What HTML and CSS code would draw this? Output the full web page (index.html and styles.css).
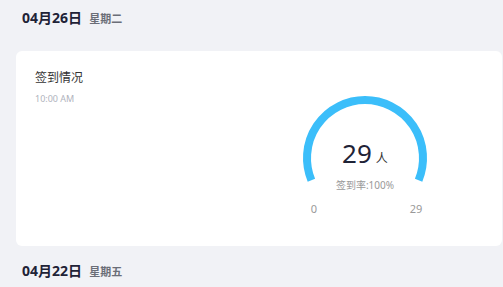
FILE: index.html
```html
<!DOCTYPE html>
<html lang="zh">
<head>
    <meta charset="UTF-8">
    <meta name="viewport" content="width=device-width, initial-scale=1.0">
    <title>签到情况</title>
    <link rel="stylesheet" href="styles.css">
</head>
<body>
    <div class="topbar"></div>

    <div class="day-head">
        <span class="day-date">04月26日</span>
        <span class="day-week">星期二</span>
    </div>

    <div class="card">
        <div class="card-info">
            <div class="card-title">签到情况</div>
            <div class="card-time">10:00 AM</div>
        </div>
        <svg class="gauge" width="140" height="150" viewBox="0 0 140 150">
            <path d="M16.4 109.2 A58 58 0 1 1 123.6 109.2" fill="none" stroke="#3bbefa" stroke-width="8"/>
            <text x="70" y="92" text-anchor="middle" class="g-num">29<tspan class="g-unit" dx="4">人</tspan></text>
            <text x="70" y="118" text-anchor="middle" class="g-rate">签到率:100%</text>
            <text x="19" y="142" text-anchor="middle" class="g-axis">0</text>
            <text x="121" y="142" text-anchor="middle" class="g-axis">29</text>
        </svg>
    </div>

    <div class="day-head next">
        <span class="day-date">04月22日</span>
        <span class="day-week">星期五</span>
    </div>
</body>
</html>
```

FILE: styles.css
```css
body {
    margin: 0;
    background: #f1f2f6;
    font-family: 'Noto Sans', 'Noto Sans CJK SC', sans-serif;
    overflow: hidden;
}

.topbar {
    height: 0;
    box-shadow: 0 1px 6px rgba(0,0,0,0.12);
}

.day-head {
    height: 34px;
    line-height: 34px;
    padding-left: 22px;
}

.day-head.next {
    margin-top: 7px;
}

.day-date {
    font-size: 14px;
    font-weight: bold;
    color: #1f2337;
}

.day-week {
    font-size: 11px;
    font-weight: bold;
    color: #6b6e78;
    margin-left: 3px;
}

.card {
    display: flex;
    align-items: flex-start;
    margin: 17px 1px 0 16px;
    height: 195px;
    box-sizing: border-box;
    padding: 18px 0 0 19px;
    background: #fff;
    border-radius: 6px;
}

.card-info {
    flex: 1;
}

.card-title {
    font-size: 12px;
    line-height: 18px;
    color: #333;
}

.card-time {
    font-size: 9px;
    line-height: 12px;
    margin-top: 6px;
    color: #b0b3bd;
}

.gauge {
    margin: 2px 67px 0 0;
}

.g-num {
    font-size: 26px;
    fill: #1f2337;
}

.g-unit {
    font-size: 12px;
    fill: #333;
}

.g-rate {
    font-size: 10px;
    fill: #999;
}

.g-axis {
    font-size: 11px;
    fill: #999;
}
```
